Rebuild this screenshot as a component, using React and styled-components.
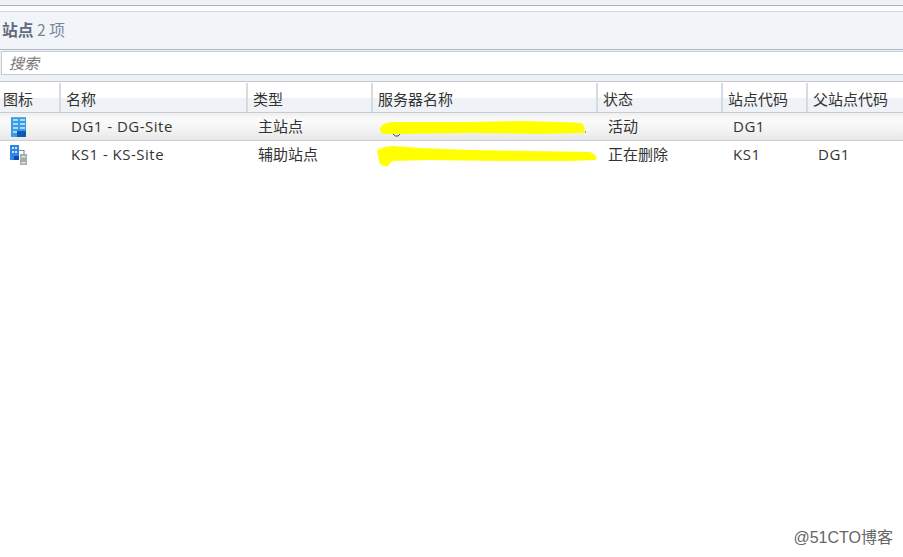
import React from 'react';
import styled, { createGlobalStyle } from 'styled-components';

const Global = createGlobalStyle`
  html, body { margin: 0; padding: 0; background: #fff; }
  body { font-family: "Noto Sans CJK SC", "Liberation Sans", sans-serif; }
`;
const Page = styled.div`
  position: relative; width: 903px; height: 557px; overflow: hidden; background: #fff;
  display: flex; flex-direction: column;
`;
const TopStrip = styled.div`
  height: 5px; background: #eef2f8; border-bottom: 1px solid #aab4c0;
`;
const Spacer = styled.div`height: 5px; background: #fbfcfd;`;
const TitleBar = styled.div`
  height: 38px; box-sizing: border-box; padding: 8px 0 0 2px;
  background: #f1f5fa; border-top: 1px solid #ccd6e0;
  font-size: 15.75px; line-height: 20px; color: #7a8798;
`;
const Strong = styled.b`font-weight: 700; color: #5f6b7d;`;
const SearchWrap = styled.div`
  height: 33px; box-sizing: border-box; padding: 1px 0 0 1px; border-top: 1px solid #b0b8c2;
  background: #eef1f5; border-bottom: 1px solid #c2c9d2;
`;
const SearchBox = styled.div`
  height: 24px; box-sizing: border-box; background: #fff; border: 1px solid #c4cbd4; border-right: 0;
  padding-left: 7px; font-size: 15px; line-height: 22px; font-style: italic; color: #777;
`;
const columns = '59px 187px 125px 225px 125px 85px 97px';
const HeaderRow = styled.div`
  display: grid; grid-template-columns: ${columns}; height: 29px; margin-top: 1px;
  border-bottom: 1px solid #c8ccd2;
`;
const HeadCell = styled.div`
  box-sizing: border-box; padding: 6px 0 0 ${p => p.$pad}px; font-size: 15px; line-height: 20px; color: #333;
  background: linear-gradient(#ffffff 0, #ffffff 50%, #eff3f7 52%, #eff3f7 100%);
  border-left: ${p => (p.$first ? 0 : 2)}px solid #d6dbe2; white-space: nowrap;
`;
const Row = styled.div`
  display: grid; grid-template-columns: ${columns}; height: 28px; align-items: center;
  box-sizing: border-box; border-bottom: 1px solid ${p => (p.$selected ? '#cfcfcf' : 'transparent')};
  font-size: 15px; color: #333;
  ${p => p.$selected && 'background: linear-gradient(#efefef, #fbfbfb 25%, #f4f4f4 60%, #e8e8e8);'}
`;
const Cell = styled.div`
  padding: 0 0 1px 12px; white-space: nowrap; line-height: 20px;
`;
const LatinCell = styled(Cell)`
  font-family: "Open Sans", "Noto Sans", sans-serif; letter-spacing: .5px;
`;
const IconCell = styled.div`padding-left: 10px; display: flex; align-items: center;`;
const Scribble = styled.svg`
  position: absolute; left: 0; top: 0; pointer-events: none;
`;
const Watermark = styled.div`
  position: absolute; right: 10px; bottom: 9px; font-size: 16px; line-height: 20px; color: #666;
  font-family: "Liberation Sans", "Noto Sans CJK SC", sans-serif;
`;

const PrimaryIcon = () => (
  <svg width="17" height="20" viewBox="0 0 17 20">
    <rect x="1" y="0" width="15" height="20" fill="#3a9be6" />
    <rect x="1" y="0" width="15" height="1" fill="#5ab2ee" />
    {[2, 6, 10].map(y => (
      <g key={y}>
        <rect x="3" y={y} width="5" height="2" fill="#a5dcf6" />
        <rect x="10" y={y} width="5" height="2" fill="#a5dcf6" />
      </g>
    ))}
    <rect x="3" y="14" width="4" height="2" fill="#a5dcf6" />
    <rect x="7" y="14" width="9" height="6" fill="#1259b5" />
  </svg>
);
const SecondaryIcon = () => (
  <svg width="18" height="20" viewBox="0 0 18 20">
    <rect x="0" y="0" width="9" height="15" fill="#3186e2" />
    <rect x="2" y="2" width="2" height="2" fill="#bfe3fa" />
    <rect x="5" y="2" width="2" height="2" fill="#bfe3fa" />
    <rect x="2" y="6" width="2" height="2" fill="#bfe3fa" />
    <rect x="5" y="6" width="2" height="2" fill="#bfe3fa" />
    <rect x="4" y="11" width="5" height="4" fill="#1048a8" />
    <path d="M9 5.5H14V9" fill="none" stroke="#8a8f96" strokeWidth="1.2" />
    <rect x="10" y="9" width="7" height="11" fill="#a6abb0" />
    <rect x="11.5" y="11" width="4" height="1.5" fill="#e3e5e8" />
    <rect x="11.5" y="14" width="4" height="1.5" fill="#7fcf6a" />
    <rect x="11.5" y="17" width="4" height="1.5" fill="#e3e5e8" />
  </svg>
);

const heads = ['图标', '名称', '类型', '服务器名称', '状态', '站点代码', '父站点代码'];

export default function App() {
  return (
    <Page>
      <Global />
      <TopStrip />
      <Spacer />
      <TitleBar><Strong>站点</Strong> 2 项</TitleBar>
      <SearchWrap><SearchBox>搜索</SearchBox></SearchWrap>
      <HeaderRow>
        {heads.map((h, i) => <HeadCell key={h} $first={i === 0} $pad={i === 0 ? 3 : 5}>{h}</HeadCell>)}
      </HeaderRow>
      <Row $selected>
        <IconCell><PrimaryIcon /></IconCell>
        <LatinCell>DG1 - DG-Site</LatinCell>
        <Cell>主站点</Cell>
        <Cell />
        <Cell>活动</Cell>
        <LatinCell>DG1</LatinCell>
        <Cell />
      </Row>
      <Row>
        <IconCell><SecondaryIcon /></IconCell>
        <LatinCell>KS1 - KS-Site</LatinCell>
        <Cell>辅助站点</Cell>
        <Cell />
        <Cell>正在删除</Cell>
        <LatinCell>KS1</LatinCell>
        <LatinCell>DG1</LatinCell>
      </Row>
      <Scribble width="903" height="557" viewBox="0 0 903 557">
        <path d="M393 134 q2 3 5 2 q2-1 2-3 M381 160 l1 3 M585 132 h1" fill="none" stroke="#444" strokeWidth="1" />
        <path d="M380 128 Q382 123 392 122 L470 122 L520 121 L560 122 L582 123 Q586 127 584 133 L540 134 L470 133 L400 134 L384 134 Q379 132 380 128 Z" fill="#ffff00" />
        <path d="M377 151 Q380 147 392 146 L420 148 L470 150 L530 151 L590 152 Q598 155 596 160 L570 161 L500 161 L430 160 L392 161 L388 166 Q379 167 379 160 Z" fill="#ffff00" />
      </Scribble>
      <Watermark>@51CTO博客</Watermark>
    </Page>
  );
}
